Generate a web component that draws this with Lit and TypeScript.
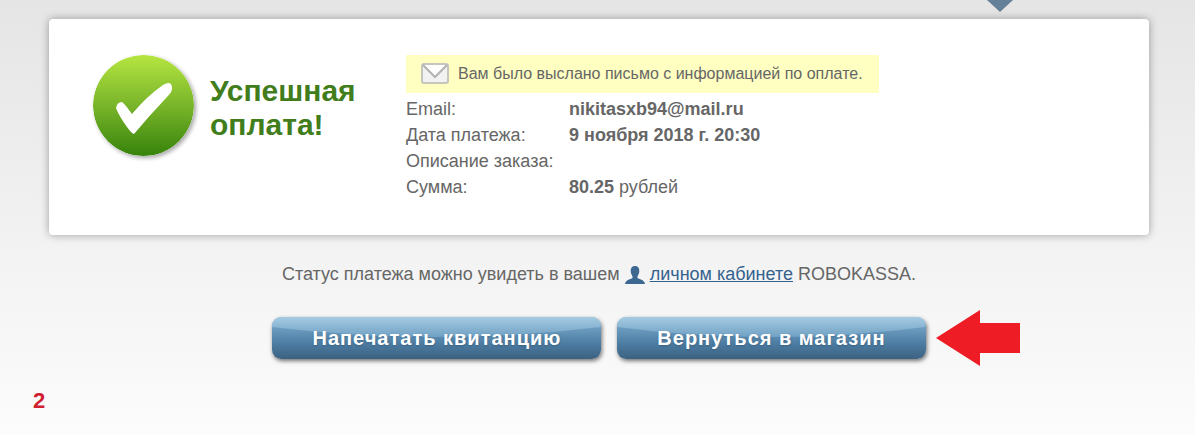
import { LitElement, html, css, svg } from "lit";
import { customElement, property } from "lit/decorators.js";

@customElement("glossy-button")
class GlossyButton extends LitElement {
  static styles = css`
    :host {
      display: block;
    }
    .button {
      position: relative;
      display: block;
      height: 42px;
      padding: 0 40px;
      border: 0;
      border-radius: 9px;
      overflow: hidden;
      background: linear-gradient(#7fadcd 0%, #6596ba 35%, #4b7ba0 65%, #3c6181 100%);
      color: #fff;
      font: bold 20px/42px "Liberation Sans", Arial, sans-serif;
      letter-spacing: 1px;
      text-shadow: 0 1px 2px rgba(30, 60, 90, 0.4);
      white-space: nowrap;
      cursor: pointer;
    }
    .frame {
      border-radius: 9px;
      box-shadow: 1px 2px 4px rgba(0, 0, 0, 0.55);
    }
    .gloss {
      position: absolute;
      inset: 0;
      width: 100%;
      height: 100%;
    }
    .label {
      position: relative;
    }
  `;

  @property() label = "";

  render() {
    return html`
      <div class="frame">
        <button class="button" type="button">
          <svg class="gloss" viewBox="0 0 330 42" preserveAspectRatio="none" aria-hidden="true">
            <defs>
              <linearGradient id="shine" x1="0" y1="0" x2="0" y2="1">
                <stop offset="0" stop-color="#abd0e5" />
                <stop offset="1" stop-color="#74a4c7" />
              </linearGradient>
            </defs>
            <path d="M0 0H330V10Q165 30 0 10Z" fill="url(#shine)" opacity=".85" />
          </svg>
          <span class="label">${this.label}</span>
        </button>
      </div>
    `;
  }
}

const checkIcon = svg`
  <defs>
    <linearGradient id="green" x1="0" y1="0" x2="0" y2="1">
      <stop offset="0" stop-color="#b5e540" />
      <stop offset=".5" stop-color="#79b52a" />
      <stop offset="1" stop-color="#37830b" />
    </linearGradient>
  </defs>
  <circle cx="50.5" cy="50.5" r="50.5" fill="url(#green)" />
  <path fill="#fff" d="M23 53Q24 47 29 47Q31 48 39 59Q54 41 70 30Q78 25 79 32Q80 36 74 42Q56 61 41 79Q39 79 34 72Q26 61 23 53Z" />
`;

@customElement("app-root")
class AppRoot extends LitElement {
  static styles = css`
    :host {
      display: block;
      position: relative;
      box-sizing: border-box;
      min-height: 100vh;
      padding: 0 46px 32px 49px;
      overflow: hidden;
      background: linear-gradient(#e5e5e5, #f3f3f3 60%, #fcfcfc);
      color: #666;
      font: 18px/26px "Liberation Sans", Arial, sans-serif;
    }
    .step {
      display: flex;
      justify-content: flex-end;
      height: 19px;
      padding-right: 136px;
    }
    .pointer {
      width: 26px;
      height: 12px;
    }
    .card {
      display: flex;
      align-items: flex-start;
      padding: 36px 44px 35px;
      border-radius: 4px;
      background: #fff;
      box-shadow: 0 0 8px rgba(0, 0, 0, 0.35);
    }
    .result {
      display: flex;
      align-items: flex-start;
      gap: 16px;
      width: 313px;
      flex: none;
    }
    .check {
      width: 101px;
      height: 101px;
      flex: none;
      border-radius: 50%;
      box-shadow: 2px 2px 4px rgba(0, 0, 0, 0.35);
    }
    .title {
      margin: 19px 0 0;
      color: #417d1b;
      font-size: 30px;
      line-height: 34px;
    }
    .notice {
      display: flex;
      align-items: center;
      gap: 9px;
      margin: 0 0 3px;
      padding: 0 16px 0 15px;
      background: #ffffc1;
      font-size: 16px;
      line-height: 38px;
    }
    .mail {
      width: 28px;
      height: 22px;
      flex: none;
    }
    .details {
      display: grid;
      grid-template-columns: 163px 1fr;
      margin: 0;
    }
    .term,
    .value {
      margin: 0;
      min-height: 26px;
    }
    .status {
      margin: 26px 0 30px;
      text-align: center;
    }
    .person {
      width: 20px;
      height: 18px;
      vertical-align: -4px;
    }
    .link {
      color: #34628f;
    }
    .actions {
      display: flex;
      justify-content: center;
      gap: 16px;
    }
    .main-action {
      position: relative;
    }
    .arrow {
      position: absolute;
      left: 100%;
      top: -8px;
      width: 84px;
      height: 58px;
      margin-left: 10px;
    }
    .mark {
      position: absolute;
      left: 33px;
      bottom: 22px;
      color: #d0202f;
      font: bold 22px/24px "Liberation Sans Narrow", "Liberation Sans", Arial, sans-serif;
    }
  `;

  render() {
    return html`
      <div class="step">
        <svg class="pointer" viewBox="0 0 26 12" aria-hidden="true">
          <path d="M0 0H26L13 12Z" fill="#668099" />
        </svg>
      </div>
      <main>
        <section class="card">
          <div class="result">
            <svg class="check" viewBox="0 0 101 101" aria-hidden="true">${checkIcon}</svg>
            <h1 class="title">Успешная оплата!</h1>
          </div>
          <div>
            <p class="notice">
              <svg class="mail" viewBox="0 0 28 22" aria-hidden="true">
                <rect x="1" y="1" width="26" height="19" rx="2" fill="#f2f2f2" stroke="#c5c5be" stroke-width="2" />
                <path d="M2 2L14 14L26 2" fill="#fff" stroke="#b2b2b0" stroke-width="2" />
              </svg>
              <span>Вам было выслано письмо с информацией по оплате.</span>
            </p>
            <dl class="details">
              <dt class="term">Email:</dt>
              <dd class="value"><b>nikitasxb94@mail.ru</b></dd>
              <dt class="term">Дата платежа:</dt>
              <dd class="value"><b>9 ноября 2018 г. 20:30</b></dd>
              <dt class="term">Описание заказа:</dt>
              <dd class="value"></dd>
              <dt class="term">Сумма:</dt>
              <dd class="value"><b>80.25</b> рублей</dd>
            </dl>
          </div>
        </section>
        <p class="status">
          Статус платежа можно увидеть в вашем
          <svg class="person" viewBox="0 0 20 18" aria-hidden="true">
            <path
              fill="#3c6892"
              d="M10 0C13 0 14.500 2 14.300 5C14.200 8 13 9 12.500 10.500V12C14 13.500 19 13 20 18H0C1 13 6 13.500 7.500 12V10.500C7 9 5.800 8 5.700 5C5.500 2 7 0 10 0Z"
            />
          </svg>
          <a class="link" href="#">личном кабинете</a> ROBOKASSA.
        </p>
        <div class="actions">
          <glossy-button label="Напечатать квитанцию"></glossy-button>
          <div class="main-action">
            <glossy-button label="Вернуться в магазин"></glossy-button>
            <svg class="arrow" viewBox="0 0 84 58" aria-hidden="true">
              <path d="M0 29L44 1V14H84V44H44V57Z" fill="#ee1c25" />
            </svg>
          </div>
        </div>
      </main>
      <span class="mark">2</span>
    `;
  }
}
